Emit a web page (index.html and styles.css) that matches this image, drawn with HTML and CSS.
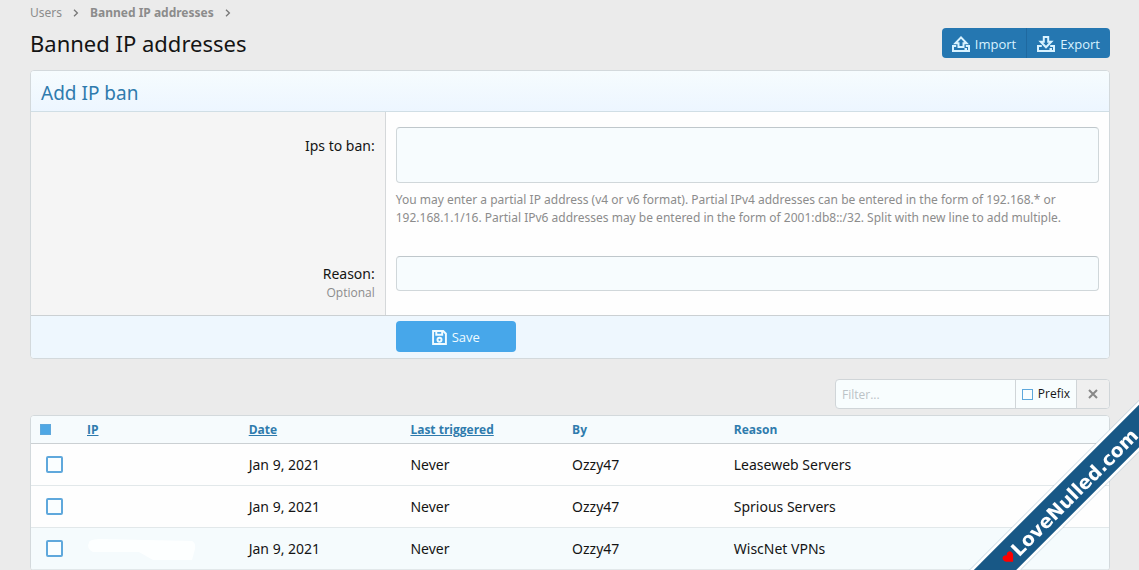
FILE: index.html
```html
<!DOCTYPE html>
<html lang="en">
<head>
<meta charset="utf-8">
<meta name="viewport" content="width=device-width, initial-scale=1">
<title>Banned IP addresses</title>
<link rel="stylesheet" href="styles.css">
</head>
<body>
<main class="page">
  <nav class="breadcrumbs" aria-label="Breadcrumb">
    <a href="#">Users</a>
    <svg class="chevron" viewBox="0 0 6 8" aria-hidden="true"><path d="M1 .8 4.4 4 1 7.2"/></svg>
    <a href="#" class="current">Banned IP addresses</a>
    <svg class="chevron" viewBox="0 0 6 8" aria-hidden="true"><path d="M1 .8 4.4 4 1 7.2"/></svg>
  </nav>

  <header class="title-bar">
    <h1>Banned IP addresses</h1>
    <div class="button-group">
      <button type="button" class="button">
        <svg class="icon" viewBox="0 0 18 16" aria-hidden="true"><path d="M6.500 11V7.200H3.400L9 1.400l5.600 5.800h-3.100V11zM4.200 10H1v5h16v-5h-3.200"/><path d="M12.500 13h2.500"/></svg>
        Import
      </button>
      <button type="button" class="button">
        <svg class="icon" viewBox="0 0 18 16" aria-hidden="true"><path d="M6.800 1h4.400v4.800h3.100L9 11.300 3.700 5.800h3.100zM4.800 10H1v5h16v-5h-3.800"/><path d="M12.500 13h2.500"/></svg>
        Export
      </button>
    </div>
  </header>

  <form class="card">
    <h2 class="card-title">Add IP ban</h2>
    <div class="form-row">
      <div class="form-label"><label for="ips">Ips to ban:</label></div>
      <div class="form-field">
        <textarea id="ips" class="input input-area" aria-describedby="ips-help"></textarea>
        <p class="help" id="ips-help">You may enter a partial IP address (v4 or v6 format). Partial IPv4 addresses can be entered in the form of 192.168.* or 192.168.1.1/16. Partial IPv6 addresses may be entered in the form of 2001:db8::/32. Split with new line to add multiple.</p>
      </div>
    </div>
    <div class="form-row">
      <div class="form-label"><label for="reason">Reason:</label><span class="hint">Optional</span></div>
      <div class="form-field"><input id="reason" class="input" type="text"></div>
    </div>
    <div class="form-submit">
      <button type="button" class="button button-primary">
        <svg class="icon-save" viewBox="0 0 14 14" aria-hidden="true"><path d="M1 1h9.500L13 3.500V13H1z"/><path d="M4 1v3.500h5.500V1"/><circle cx="7" cy="9.200" r="1.900"/></svg>
        Save
      </button>
    </div>
  </form>

  <div class="filter">
    <input class="filter-text" type="text" placeholder="Filter..." aria-label="Filter">
    <label class="filter-prefix"><input type="checkbox" class="check check-small"> Prefix</label>
    <button type="button" class="filter-clear" aria-label="Clear filter"><svg viewBox="0 0 10 10" aria-hidden="true"><path d="M1 1l8 8M9 1 1 9"/></svg></button>
  </div>

  <div class="card">
    <table class="data">
      <thead>
        <tr>
          <th class="col-check"><input type="checkbox" class="check check-small" aria-label="Select all" checked></th>
          <th class="col"><a href="#">IP</a></th>
          <th class="col"><a href="#">Date</a></th>
          <th class="col"><a href="#">Last triggered</a></th>
          <th class="col">By</th>
          <th>Reason</th>
        </tr>
      </thead>
      <tbody>
        <tr><td class="col-check"><input type="checkbox" class="check" aria-label="Select Leaseweb Servers"></td><td></td><td>Jan 9, 2021</td><td>Never</td><td>Ozzy47</td><td>Leaseweb Servers</td></tr>
        <tr><td class="col-check"><input type="checkbox" class="check" aria-label="Select Sprious Servers"></td><td></td><td>Jan 9, 2021</td><td>Never</td><td>Ozzy47</td><td>Sprious Servers</td></tr>
        <tr class="active"><td class="col-check"><input type="checkbox" class="check" aria-label="Select WiscNet VPNs"></td><td><svg class="redaction" viewBox="0 0 110 24" aria-hidden="true"><path d="M2 6Q1 3 12 2l93 2q4 2 3 8l-3 11H66L52 15H6Q-1 11 2 6z"/></svg></td><td>Jan 9, 2021</td><td>Never</td><td>Ozzy47</td><td>WiscNet VPNs</td></tr>
      </tbody>
    </table>
  </div>
</main>
<div class="ribbon-corner">
  <div class="ribbon"><svg class="heart" viewBox="0 0 12 11" aria-hidden="true"><path d="M6 11 1 6Q-1 3 1 1q2.500-2 5 1 2.500-3 5-1 2 2 0 5z"/></svg>LoveNulled.com</div>
</div>
</body>
</html>
```
FILE: styles.css
```css
* { box-sizing: border-box; }

body {
  margin: 0;
  min-height: 100vh;
  overflow: hidden;
  background: #ebebeb;
  color: #141414;
  font: 14px/20px "Noto Sans", "Open Sans", sans-serif;
}

button, input, textarea { font: inherit; color: inherit; }

.page { padding: 3px 29px 0 30px; }

.breadcrumbs {
  display: flex;
  align-items: center;
  gap: 11px;
  font-size: 12px;
  line-height: 20px;
}
.breadcrumbs a { color: #8c8c8c; text-decoration: none; }
.breadcrumbs .current { font-weight: 700; }
.chevron { width: 6px; height: 8px; fill: none; stroke: #777; stroke-width: 1.300; }

.title-bar {
  display: flex;
  justify-content: space-between;
  align-items: center;
  margin: 5px 0 12px;
}
h1 { margin: 0; padding-top: 1px; font-size: 22px; line-height: 29px; font-weight: 400; }

.button-group { display: flex; border-radius: 4px; overflow: hidden; }
.button {
  display: flex;
  align-items: center;
  justify-content: center;
  gap: 5px;
  height: 30px;
  padding: 1px 10px 0;
  border: 0;
  background: #2577b1;
  color: #d8f2ff;
  font-family: "Open Sans", sans-serif;
  font-size: 13px;
}
.button + .button { border-left: 1px solid #1f69a0; }
.icon { width: 18px; height: 16px; fill: none; stroke: currentColor; stroke-width: 2; }

.card {
  background: #fefefe;
  border: 1px solid #d3d9dc;
  border-radius: 4px;
  overflow: hidden;
}
.card-title {
  margin: 0;
  padding: 10px 10px 5px;
  border-bottom: 1px solid #d0dee5;
  background: linear-gradient(#f6fcfe, #edf6ff);
  color: #2f7bad;
  font-size: 19px;
  line-height: 25px;
  font-weight: 400;
}

.form-row { display: grid; grid-template-columns: calc(33% - 1px) 1fr; }
.form-label {
  padding: 24px 10px 0;
  border-right: 1px solid #d5d8da;
  background: #f5f5f5;
  text-align: right;
}
.form-label label { display: block; }
.form-row + .form-row .form-label { padding-top: 22px; }
.form-row + .form-row .form-field { padding: 14px 10px 24px; }
.form-field { padding: 15px 10px; }
.hint {
  display: block;
  color: #8c8c8c;
  font-family: "Open Sans", sans-serif;
  font-size: 12px;
  line-height: 18px;
}
.input {
  display: block;
  width: 100%;
  height: 35px;
  padding: 5px;
  border: 1px solid #d0d7da;
  border-top-color: #bfc7cb;
  border-radius: 4px;
  background: #f7fcfe;
}
.input-area { height: 56px; resize: none; }
.help {
  margin: 8px 0 0;
  color: #8c8c8c;
  font-size: 12px;
  line-height: 18px;
}

.form-submit {
  padding: 5px 10px 6px calc(33% + 9px);
  border-top: 1px solid #cbd0d3;
  background: #eef7fe;
}
.button-primary {
  width: 120px;
  height: 31px;
  border-radius: 4px;
  background: #47a7ea;
  color: #f0fbff;
}
.icon-save { width: 15px; height: 15px; fill: none; stroke: currentColor; stroke-width: 1.800; }

.filter {
  display: flex;
  width: 275px;
  height: 30px;
  margin: 20px 0 6px auto;
  border: 1px solid #d0d5d8;
  border-radius: 4px;
  background: #f8fdfe;
  overflow: hidden;
  font-family: "Open Sans", sans-serif;
  font-size: 12px;
}
.filter-text { flex: 1; min-width: 0; padding: 1px 6px 0; border: 0; background: transparent; }
.filter-text::placeholder { color: #bcc3c7; opacity: 1; }
.filter-prefix {
  display: flex;
  align-items: center;
  gap: 5px;
  padding: 0 6px;
  border: solid #d0d5d8;
  border-width: 0 1px;
}
.filter-clear {
  display: grid;
  place-items: center;
  width: 32px;
  padding: 0;
  border: 0;
  background: #efefef;
}
.filter-clear svg { width: 10px; height: 10px; stroke: #888; stroke-width: 2; }

.check {
  appearance: none;
  display: block;
  width: 17px;
  height: 17px;
  margin: 0;
  border: 2px solid #5fa8dc;
  border-radius: 2px;
  background: #fafeff;
}
.check-small { width: 11px; height: 11px; border-width: 1px; border-radius: 0; }
.check:checked { background: #4fa7e4; }

.data { width: 100%; border-collapse: collapse; table-layout: fixed; }
.data th, .data td { padding: 0 10px; text-align: left; }
.data th {
  height: 27px;
  padding-top: 2px;
  border-bottom: 1px solid #cbd0d3;
  background: #f6fbfd;
  color: #2f7bad;
  font-family: "Open Sans", sans-serif;
  font-size: 12px;
  font-weight: 700;
}
.data th a { color: inherit; text-decoration: underline; }
.data td { height: 42px; padding-top: 2px; border-bottom: 1px solid #e2e8ea; }
.data td.col-check { width: 46px; padding: 0 0 0 15px; }
.data th.col-check { width: 46px; padding: 0 0 0 9px; }
.col { width: 15%; }
.active { background: #f5fbfd; }
.redaction { display: block; width: 110px; height: 24px; fill: #fdffff; }

.ribbon-corner {
  position: fixed;
  right: 0;
  bottom: 0;
  width: 180px;
  height: 180px;
  overflow: hidden;
  pointer-events: none;
}
.ribbon {
  position: absolute;
  right: -70px;
  bottom: 56px;
  display: flex;
  align-items: center;
  justify-content: center;
  gap: 1px;
  width: 280px;
  height: 36px;
  padding-top: 2px;
  border: solid #fff;
  border-width: 3px 0;
  background: #185886;
  color: #fff;
  font: 700 19px/28px "DejaVu Sans", sans-serif;
  transform: rotate(-45deg);
}
.heart { width: 12px; height: 11px; fill: #f00; }
```
